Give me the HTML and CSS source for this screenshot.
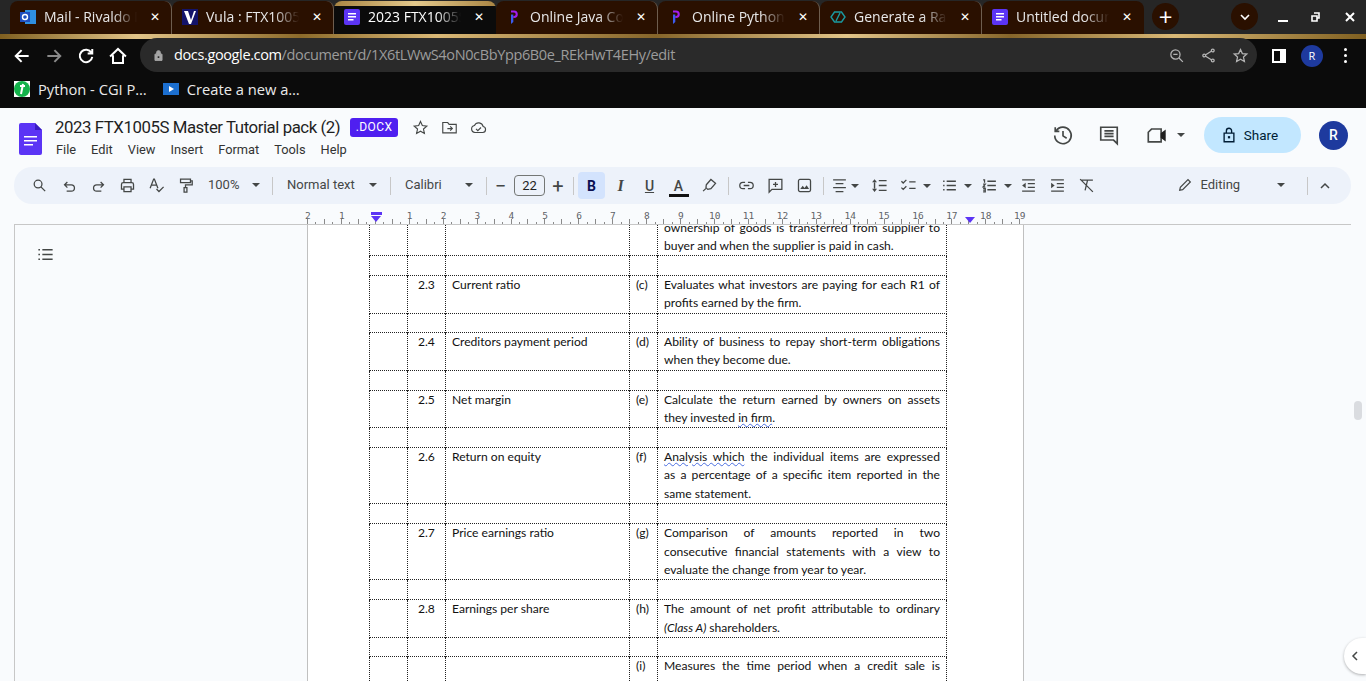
FILE: index.html
```html
<!DOCTYPE html>
<html lang="en">
<head>
  <meta charset="UTF-8">
  <title>2023 FTX1005S Master Tutorial pack (2)</title>
  <link rel="stylesheet" href="styles.css">
</head>
<body>
  <svg class="defs" width="0" height="0">
    <symbol id="i-search" viewBox="0 0 24 24"><circle cx="10" cy="10" r="5.5"/><path d="M14 14l6 6"/></symbol>
    <symbol id="i-undo" viewBox="0 0 24 24"><path d="M9 7l-4 4 4 4M5 11h9.500a4.500 4.500 0 0 1 0 9H8"/></symbol>
    <symbol id="i-redo" viewBox="0 0 24 24"><path d="M15 7l4 4-4 4M19 11H9.500a4.500 4.500 0 0 0 0 9H16"/></symbol>
    <symbol id="i-print" viewBox="0 0 24 24"><path d="M7 8V3.500h10V8M7 17H3.500v-6.500A2.500 2.500 0 0 1 6 8h12a2.500 2.500 0 0 1 2.500 2.500V17H17"/><path d="M7 14h10v6.500H7z"/></symbol>
    <symbol id="i-spell" viewBox="0 0 24 24"><path d="M3 16L8 3h1l5 13M5 11.500h7M12 17l3.500 3.500L22 14"/></symbol>
    <symbol id="i-paint" viewBox="0 0 24 24"><path d="M5 3h14v5H5zM19 5.500h2.500v5.500H12v4M10 15h4v6.500h-4z"/></symbol>
    <symbol id="i-ul" viewBox="0 0 24 24"><path d="M8 6h13M8 12h13M8 18h13"/><path class="dot" d="M3 5h2v2H3zM3 11h2v2H3zM3 17h2v2H3z"/></symbol>
    <symbol id="i-ol" viewBox="0 0 24 24"><path d="M9 6h12M9 12h12M9 18h12"/><path class="thin" d="M3 4h2v4M3 10h3l-3 4h3M3 16h3v5H3M3 18.500h3"/></symbol>
    <symbol id="i-check" viewBox="0 0 24 24"><path d="M2 6l2.500 2.500L9 4M2 15l2.500 2.500L9 13M13 7h9M13 16h9"/></symbol>
    <symbol id="i-align" viewBox="0 0 24 24"><path d="M3 4h18M6.500 9.500h11M3 15h18M6.500 20.500h11"/></symbol>
    <symbol id="i-spacing" viewBox="0 0 24 24"><path d="M11 5h11M11 12h11M11 19h11"/><path class="dot" d="M5 3L1.500 7.500h7zM5 21l3.500-4.500h-7zM4 7h2v10H4z"/></symbol>
    <symbol id="i-link" viewBox="0 0 24 24"><path d="M10 7.500H7a4.500 4.500 0 0 0 0 9h3M14 7.500h3a4.500 4.500 0 0 1 0 9h-3M8 12h8"/></symbol>
    <symbol id="i-addnote" viewBox="0 0 24 24"><path d="M3 3.500h18v14H7L3 21.500zM12 7v7M8.500 10.500h7"/></symbol>
    <symbol id="i-image" viewBox="0 0 24 24"><rect x="3.500" y="3.500" width="17" height="17" rx="2"/><path class="dot" d="M6 17l3.500-4.500L12 15.500l3-4 3.500 5.500z"/></symbol>
    <symbol id="i-outdent" viewBox="0 0 24 24"><path d="M3 4h18M11 9.500h10M11 14.500h10M3 20h18"/><path class="dot" d="M8 8v8l-5-4z"/></symbol>
    <symbol id="i-indent" viewBox="0 0 24 24"><path d="M3 4h18M11 9.500h10M11 14.500h10M3 20h18"/><path class="dot" d="M3 8v8l5-4z"/></symbol>
    <symbol id="i-clear" viewBox="0 0 24 24"><path d="M4 4.500h17M13.500 4.500L10 19M3 3l18 18"/></symbol>
    <symbol id="i-pencil" viewBox="0 0 24 24"><path d="M4 20l1-4.500L16.500 4l3.500 3.500L8.500 19z"/></symbol>
    <symbol id="i-highlight" viewBox="0 0 24 24"><path d="M7.500 11l6.500-7.500 6.500 5.500-6.500 7.500-4.500 1-2.500-2.500z"/><path d="M3 20l4-4"/></symbol>
    <symbol id="i-star" viewBox="0 0 24 24"><path d="M12 3.500l2.600 5.800 6.300.7-4.700 4.200 1.300 6.200L12 17.200l-5.500 3.200 1.300-6.200L3.100 10l6.300-.7z"/></symbol>
    <symbol id="i-folder" viewBox="0 0 24 24"><path d="M2.500 5h7l2 2.500h10v12h-19zM9 13.500h7M13 10.500l3 3-3 3"/></symbol>
    <symbol id="i-cloud" viewBox="0 0 24 24"><path d="M7 19a5 5 0 0 1-.7-9.900A6.500 6.500 0 0 1 18.500 10.500 4.300 4.300 0 0 1 18 19zM8.500 14l2.500 2.500 4.500-4.500"/></symbol>
    <symbol id="i-history" viewBox="0 0 24 24"><path d="M4.500 7.500a9 9 0 1 1-1.500 5M3.500 3.500v4.500H8M12 7.500V13l4 2.500"/></symbol>
    <symbol id="i-comment" viewBox="0 0 24 24"><path d="M3 3.500h18v18l-4-4H3zM7 7.500h10M7 10.500h10M7 13.500h10"/></symbol>
    <symbol id="i-meet" viewBox="0 0 24 24"><path d="M2.500 9l3.500-3.500h10.500v14h-14z"/><path class="dot" d="M16 10l5.500-4v13L16 15z"/></symbol>
    <symbol id="i-lock" viewBox="0 0 24 24"><path d="M5.500 9.500h13v11.500h-13zM8.500 9.500V6.500a3.500 3.500 0 0 1 7 0v3"/><path class="dot" d="M10.500 13.500h3v3h-3z"/></symbol>
    <symbol id="i-back" viewBox="0 0 24 24"><path d="M20 12H5M11.500 5L4.500 12l7 7"/></symbol>
    <symbol id="i-forward" viewBox="0 0 24 24"><path d="M4 12h15M12.500 5l7 7-7 7"/></symbol>
    <symbol id="i-reload" viewBox="0 0 24 24"><path d="M18.500 8A7.500 7.500 0 1 0 19.500 13M19.500 3.500V9h-5.500"/></symbol>
    <symbol id="i-home" viewBox="0 0 24 24"><path d="M2.500 12.500L12 3.500l9.500 9M6 11v9.500h12V11"/></symbol>
    <symbol id="i-share" viewBox="0 0 24 24"><circle cx="18" cy="5" r="2"/><circle cx="6" cy="12" r="2"/><circle cx="18" cy="19" r="2"/><path d="M8 11l8-5M8 13l8 5"/></symbol>
    <symbol id="i-zoomout" viewBox="0 0 24 24"><circle cx="10.500" cy="10.500" r="6.500"/><path d="M15.500 15.500L21 21M7.500 10.500h6"/></symbol>
    <symbol id="i-pcode" viewBox="0 0 10 16"><path d="M2 1.500h3a3.800 3.800 0 0 1 0 7.600H4.300V7H5a1.700 1.700 0 0 0 0-3.400H2z" style="fill:#a21cf0;stroke:none"/><path d="M2 5.500h2.300V13L2 15z" style="fill:#3c5cf0;stroke:none"/></symbol>
  </svg>

  <div class="tabstrip">
    <div class="tab">
      <svg class="favicon" viewBox="0 0 16 16"><rect x="5" y="1" width="11" height="14" fill="#2f8fe0"/><rect x="0" y="3" width="10" height="10" fill="#1f4fc0"/><circle cx="5" cy="8" r="2.500" fill="none" stroke="#fff" stroke-width="1.400"/></svg>
      <span class="tab-title">Mail - Rivaldo Mbhele</span><span class="tab-x">✕</span>
    </div>
    <div class="tab">
      <svg class="favicon" viewBox="0 0 16 16"><rect width="16" height="16" fill="#14146a"/><path d="M2 2h4l3 9 3-9h2l-5 13H7z" fill="#fff"/></svg>
      <span class="tab-title">Vula : FTX1005S</span><span class="tab-x">✕</span>
    </div>
    <div class="tab tab-active">
      <svg class="favicon" viewBox="0 0 16 16"><rect width="16" height="16" rx="2" fill="#5b34f5"/><path d="M4 4h8v1.500H4zM4 7h8v1.500H4zM4 10h5.500v1.500H4z" fill="#fff"/></svg>
      <span class="tab-title">2023 FTX1005S Master</span><span class="tab-x">✕</span>
    </div>
    <div class="tab">
      <svg class="favicon"><use href="#i-pcode"/></svg>
      <span class="tab-title">Online Java Compiler</span><span class="tab-x">✕</span>
    </div>
    <div class="tab">
      <svg class="favicon"><use href="#i-pcode"/></svg>
      <span class="tab-title">Online Python Compiler</span><span class="tab-x">✕</span>
    </div>
    <div class="tab">
      <svg class="favicon" viewBox="0 0 16 16"><path d="M4.500 3h7L15 8l-3.500 5h-7L1 8zM6 12l4-8" fill="none" stroke="#1a9aa0" stroke-width="1.400"/></svg>
      <span class="tab-title">Generate a Random</span><span class="tab-x">✕</span>
    </div>
    <div class="tab tab-last">
      <svg class="favicon" viewBox="0 0 16 16"><rect width="16" height="16" rx="2" fill="#5b34f5"/><path d="M4 4h8v1.500H4zM4 7h8v1.500H4zM4 10h5.500v1.500H4z" fill="#fff"/></svg>
      <span class="tab-title">Untitled document</span><span class="tab-x">✕</span>
    </div>
    <div class="round-btn newtab">+</div>
    <div class="round-btn tabsearch"><svg width="12" height="12" viewBox="0 0 12 12"><path d="M2 4l4 4 4-4" fill="none" stroke="#fff" stroke-width="1.600"/></svg></div>
    <div class="winctl">
      <svg width="14" height="14" viewBox="0 0 14 14"><path d="M2 11h10" stroke="#fff" stroke-width="2"/></svg>
      <svg width="14" height="14" viewBox="0 0 14 14"><path d="M6 3h5v5h-2M4 6h5v5H4z" fill="none" stroke="#fff" stroke-width="1.600"/></svg>
      <svg class="win-close" width="14" height="14" viewBox="0 0 14 14"><path d="M3 3l8 8M11 3l-8 8" stroke="#fff" stroke-width="2"/></svg>
    </div>
  </div>
  <div class="goldband"></div>

  <div class="navbar">
    <svg class="ic nav-btn nav-on"><use href="#i-back"/></svg>
    <svg class="ic nav-btn nav-off"><use href="#i-forward"/></svg>
    <svg class="ic nav-btn nav-on"><use href="#i-reload"/></svg>
    <svg class="ic nav-btn nav-on"><use href="#i-home"/></svg>
    <div class="omnibox">
      <svg class="ic ic-lock"><use href="#i-lock"/></svg>
      <span class="url"><span class="url-host">docs.google.com</span>/document/d/1X6tLWwS4oN0cBbYpp6B0e_REkHwT4EHy/edit</span>
      <svg class="ic omni-ic"><use href="#i-zoomout"/></svg>
      <svg class="ic omni-ic"><use href="#i-share"/></svg>
      <svg class="ic omni-ic"><use href="#i-star"/></svg>
    </div>
    <div class="panel-ic"></div>
    <div class="nav-avatar">R</div>
    <div class="kebab"><i></i><i></i><i></i></div>
  </div>

  <div class="bookmarks">
    <div class="bookmark">
      <svg class="favicon" viewBox="0 0 16 16"><rect width="16" height="16" fill="#fff"/><circle cx="8" cy="8" r="8" fill="#12b24a"/><path d="M6 5h5M9 3L7 13" stroke="#fff" stroke-width="2" fill="none"/></svg>
      Python - CGI P…
    </div>
    <div class="bookmark">
      <svg class="favicon" viewBox="0 0 16 16"><rect y="2" width="16" height="12" fill="#1c6fd0"/><path d="M6 5l5 3-5 3z" fill="#fff"/></svg>
      Create a new a…
    </div>
  </div>

  <header class="docbar">
    <svg class="docs-logo" viewBox="0 0 23 32"><path d="M2 0h14l7 7v23a2 2 0 0 1-2 2H2a2 2 0 0 1-2-2V2a2 2 0 0 1 2-2z" fill="#5b34f5"/><path d="M16 0l7 7h-7z" fill="#3a1cc0"/><path d="M5 13h13v1.500H5zM5 17h13v1.500H5zM5 21h9v1.500H5z" fill="#fff"/></svg>
    <div class="doc-meta">
      <div class="doc-titlerow">
        <span class="doc-title">2023 FTX1005S Master Tutorial pack (2)</span>
        <span class="badge">.DOCX</span>
        <svg class="ic title-ic"><use href="#i-star"/></svg>
        <svg class="ic title-ic"><use href="#i-folder"/></svg>
        <svg class="ic title-ic"><use href="#i-cloud"/></svg>
      </div>
      <nav class="menu">
        <span>File</span><span>Edit</span><span>View</span><span>Insert</span><span>Format</span><span>Tools</span><span>Help</span>
      </nav>
    </div>
    <div class="doc-actions">
      <svg class="ic act-ic"><use href="#i-history"/></svg>
      <svg class="ic act-ic act-comment"><use href="#i-comment"/></svg>
      <svg class="ic act-ic act-meet"><use href="#i-meet"/></svg>
      <span class="caret act-caret"></span>
      <div class="share"><svg class="ic share-ic"><use href="#i-lock"/></svg>Share</div>
      <div class="avatar">R</div>
    </div>
  </header>

  <div class="toolbar">
    <span class="tb tb-first"><svg class="ic"><use href="#i-search"/></svg></span>
    <span class="tb"><svg class="ic"><use href="#i-undo"/></svg></span>
    <span class="tb"><svg class="ic"><use href="#i-redo"/></svg></span>
    <span class="tb"><svg class="ic"><use href="#i-print"/></svg></span>
    <span class="tb"><svg class="ic"><use href="#i-spell"/></svg></span>
    <span class="tb"><svg class="ic"><use href="#i-paint"/></svg></span>
    <span class="drop drop-zoom">100%<span class="caret"></span></span>
    <span class="sep sep-zoom"></span>
    <span class="drop drop-style">Normal text<span class="caret"></span></span>
    <span class="sep"></span>
    <span class="drop drop-font">Calibri<span class="caret"></span></span>
    <span class="sep"></span>
    <span class="tb tb-sign tb-minus">−</span>
    <span class="fontsize">22</span>
    <span class="tb tb-sign tb-plus">+</span>
    <span class="sep sep-size"></span>
    <span class="tb tb-bold">B</span>
    <span class="tb tb-letter tb-italic">I</span>
    <span class="tb tb-letter tb-under">U</span>
    <span class="tb tb-letter tb-color">A</span>
    <span class="tb tb-hl"><svg class="ic"><use href="#i-highlight"/></svg></span>
    <span class="sep sep-hl"></span>
    <span class="tb"><svg class="ic"><use href="#i-link"/></svg></span>
    <span class="tb"><svg class="ic"><use href="#i-addnote"/></svg></span>
    <span class="tb"><svg class="ic"><use href="#i-image"/></svg></span>
    <span class="sep sep-img"></span>
    <span class="tb tb-caret tb-align"><svg class="ic"><use href="#i-align"/></svg><span class="caret"></span></span>
    <span class="tb"><svg class="ic"><use href="#i-spacing"/></svg></span>
    <span class="tb tb-caret tb-check"><svg class="ic"><use href="#i-check"/></svg><span class="caret"></span></span>
    <span class="tb tb-caret"><svg class="ic"><use href="#i-ul"/></svg><span class="caret"></span></span>
    <span class="tb tb-caret tb-ol"><svg class="ic"><use href="#i-ol"/></svg><span class="caret"></span></span>
    <span class="tb"><svg class="ic"><use href="#i-outdent"/></svg></span>
    <span class="tb"><svg class="ic"><use href="#i-indent"/></svg></span>
    <span class="tb"><svg class="ic"><use href="#i-clear"/></svg></span>
    <span class="mode"><svg class="ic"><use href="#i-pencil"/></svg><span class="mode-label">Editing</span><span class="caret"></span></span>
    <span class="sep sep-mode"></span>
    <svg class="chev" width="12" height="12" viewBox="0 0 12 12"><path d="M2 8l4-4 4 4" fill="none" stroke="#444746" stroke-width="1.500"/></svg>
  </div>

  <div class="ruler">
    <div class="ruler-nums">
      <span>2</span><span>1</span><span></span><span>1</span><span>2</span><span>3</span><span>4</span><span>5</span><span>6</span><span>7</span><span>8</span><span>9</span><span>10</span><span>11</span><span>12</span><span>13</span><span>14</span><span>15</span><span>16</span><span>17</span><span>18</span><span>19</span>
    </div>
    <span class="indent-bar"></span>
    <span class="indent-left"></span>
    <span class="indent-right"></span>
  </div>

  <main class="workspace">
    <aside class="outline"><svg class="ic outline-ic"><use href="#i-ul"/></svg></aside>
    <section class="page">
      <table class="qtable">
        <colgroup><col class="c1"><col class="c2"><col class="c3"><col class="c4"><col class="c5"></colgroup>
        <tr class="r38 first"><td></td><td></td><td></td><td></td><td><span class="ln just">ownership of goods is transferred from supplier to</span><span class="ln">buyer and when the supplier is paid in cash.</span></td></tr>
        <tr class="r20"><td></td><td></td><td></td><td></td><td></td></tr>
        <tr class="r38"><td></td><td class="num">2.3</td><td>Current ratio</td><td class="let">(c)</td><td><span class="ln just">Evaluates what investors are paying for each R1 of</span><span class="ln">profits earned by the firm.</span></td></tr>
        <tr class="r19"><td></td><td></td><td></td><td></td><td></td></tr>
        <tr class="r38"><td></td><td class="num">2.4</td><td>Creditors payment period</td><td class="let">(d)</td><td><span class="ln just">Ability of business to repay short-term obligations</span><span class="ln">when they become due.</span></td></tr>
        <tr class="r20"><td></td><td></td><td></td><td></td><td></td></tr>
        <tr class="r37"><td></td><td class="num">2.5</td><td>Net margin</td><td class="let">(e)</td><td><span class="ln just">Calculate the return earned by owners on assets</span><span class="ln">they invested <span class="squiggle">in firm</span>.</span></td></tr>
        <tr class="r20"><td></td><td></td><td></td><td></td><td></td></tr>
        <tr class="r56"><td></td><td class="num">2.6</td><td>Return on equity</td><td class="let">(f)</td><td><span class="ln just"><span class="squiggle">Analysis which</span> the individual items are expressed</span><span class="ln just">as a percentage of a specific item reported in the</span><span class="ln">same statement.</span></td></tr>
        <tr class="r20"><td></td><td></td><td></td><td></td><td></td></tr>
        <tr class="r56"><td></td><td class="num">2.7</td><td>Price earnings ratio</td><td class="let">(g)</td><td><span class="ln just">Comparison of amounts reported in two</span><span class="ln just">consecutive financial statements with a view to</span><span class="ln">evaluate the change from year to year.</span></td></tr>
        <tr class="r20"><td></td><td></td><td></td><td></td><td></td></tr>
        <tr class="r38"><td></td><td class="num">2.8</td><td>Earnings per share</td><td class="let">(h)</td><td><span class="ln just">The amount of net profit attributable to ordinary</span><span class="ln"><em>(Class A)</em> shareholders.</span></td></tr>
        <tr class="r19"><td></td><td></td><td></td><td></td><td></td></tr>
        <tr class="r38"><td></td><td></td><td></td><td class="let">(i)</td><td><span class="ln just">Measures the time period when a credit sale is</span></td></tr>
      </table>
    </section>
    <div class="scroll-thumb"></div>
  </main>
  <div class="side-toggle"><svg width="12" height="12" viewBox="0 0 12 12"><path d="M8 2L4 6l4 4" fill="none" stroke="#444746" stroke-width="1.500"/></svg></div>
</body>
</html>
```

FILE: styles.css
```css
* {
  box-sizing: border-box;
}

html, body {
  margin: 0;
  height: 100%;
}

body {
  position: relative;
  width: 1366px;
  height: 681px;
  overflow: hidden;
  display: flex;
  flex-direction: column;
  background: #f9fbfd;
  font-family: "Open Sans", "Noto Sans", sans-serif;
  color: #1f1f1f;
}

.defs {
  position: absolute;
}

.ic {
  width: 18px;
  height: 18px;
  flex: none;
  fill: none;
  stroke: #444746;
  stroke-width: 1.8;
}

symbol .dot {
  fill: currentColor;
  stroke: none;
}

.favicon {
  width: 16px;
  height: 16px;
  flex: none;
}

/* browser chrome */
.tabstrip {
  height: 34px;
  flex: none;
  display: flex;
  align-items: flex-end;
  padding-left: 10px;
  background: #262626;
}

.tab {
  width: 162px;
  height: 33px;
  display: flex;
  align-items: center;
  padding: 0 0 2px 10px;
  background: #2a1000;
  border-radius: 8px 8px 0 0;
  border-right: 1px solid #6e5d4e;
  color: #e8e8e8;
  font-size: 14px;
}

.tab-active {
  background: linear-gradient(90deg, #a98543, #e4c98c 50%, #a98543) top / 100% 5px no-repeat, #0b0b0b;
  border: 0;
  color: #fff;
}

.tab-last {
  border-right: 0;
}

.tab-title {
  width: 95px;
  margin-left: 8px;
  white-space: nowrap;
  overflow: hidden;
  -webkit-mask-image: linear-gradient(90deg, #000 72%, transparent 98%);
  mask-image: linear-gradient(90deg, #000 72%, transparent 98%);
}

.tab-x {
  margin-left: 11px;
  font-size: 12px;
  color: #fff;
}

.round-btn {
  display: flex;
  align-items: center;
  justify-content: center;
  width: 27px;
  height: 27px;
  margin-bottom: 4px;
  border-radius: 50%;
  background: #2a1000;
  color: #fff;
}

.newtab {
  margin-left: 8px;
  font-size: 24px;
  line-height: 1;
}

.tabsearch {
  margin-left: 52px;
}

.winctl {
  display: flex;
  gap: 18px;
  margin-left: 18px;
  margin-bottom: 10px;
}

.win-close {
  margin-left: 3px;
}

.goldband {
  height: 5px;
  flex: none;
  background: linear-gradient(90deg, #7f5f20 0, #e2c488 10%, #8c6a2a 22%, #d9b876 32%, #86652a 48%, #e2c488 62%, #86652a 74%, #d9b876 86%, #7f5f20 100%);
}

.navbar {
  height: 33px;
  flex: none;
  display: flex;
  align-items: center;
  padding-left: 12px;
  background: #0b0b0b;
}

.nav-btn {
  width: 20px;
  height: 20px;
  margin-right: 12px;
  stroke-width: 2.4;
}

.nav-on {
  stroke: #fff;
}

.nav-off {
  stroke: #8a8a8a;
}

.omnibox {
  width: 1117px;
  height: 34px;
  margin-top: -1px;
  display: flex;
  align-items: center;
  padding: 0 8px 0 12px;
  border-radius: 17px;
  background: #2a2a2a;
}

.ic-lock {
  width: 13px;
  height: 13px;
  stroke: #a6a6a6;
  fill: #a6a6a6;
}

.url {
  flex: 1;
  margin: -2px 0 0 9px;
  font-size: 14.5px;
  letter-spacing: -0.37px;
  color: #9c9c9c;
  white-space: nowrap;
}

.url-host {
  color: #fff;
}

.omni-ic {
  width: 17px;
  height: 17px;
  margin-left: 15px;
  stroke: #b4b4b4;
}

.panel-ic {
  width: 14px;
  height: 14px;
  margin-left: 15px;
  border: 2px solid #fff;
  border-right-width: 6px;
}

.nav-avatar {
  width: 22px;
  height: 22px;
  margin-left: 15px;
  border-radius: 50%;
  background: #1e3a9e;
  color: #fff;
  font-size: 11px;
  line-height: 22px;
  text-align: center;
}

.kebab {
  display: flex;
  flex-direction: column;
  gap: 3px;
  margin-left: 21px;
}

.kebab i {
  width: 3px;
  height: 3px;
  border-radius: 50%;
  background: #fff;
}

.bookmarks {
  height: 36px;
  flex: none;
  display: flex;
  align-items: center;
  gap: 16px;
  padding: 0 0 2px 14px;
  background: #0b0b0b;
}

.bookmark {
  display: flex;
  align-items: center;
  gap: 8px;
  color: #eaeaea;
  font-size: 14.7px;
}

/* docs header */
.docbar {
  height: 59px;
  flex: none;
  display: flex;
  padding: 9px 0 0 19px;
  font-family: Roboto, "Open Sans", sans-serif;
}

.docs-logo {
  width: 23px;
  height: 32px;
  margin-top: 6px;
}

.doc-meta {
  margin-left: 13px;
}

.doc-titlerow {
  display: flex;
  align-items: center;
  height: 20px;
}

.doc-title {
  font-size: 16.8px;
  letter-spacing: -0.43px;
}

.badge {
  margin: 0 2px 0 10px;
  padding: 0 5.5px;
  height: 19px;
  line-height: 19px;
  border-radius: 3px;
  background: #4f1ff0;
  color: #fff;
  font-size: 12px;
  letter-spacing: 0.4px;
}

.title-ic {
  width: 17px;
  height: 17px;
  margin-left: 12px;
  stroke-width: 1.6;
}

.menu {
  display: flex;
  gap: 15px;
  margin-top: 5px;
  padding-left: 1px;
  font-size: 12.8px;
  color: #333;
}

.doc-actions {
  display: flex;
  align-items: center;
  margin-left: auto;
  height: 36px;
}

.act-ic {
  width: 22px;
  height: 22px;
  margin-right: 24px;
}

.act-comment {
  margin-right: 26px;
}

.act-meet {
  margin-right: 0;
}

.act-caret {
  margin: 0 19px 0 9px;
}

.caret {
  display: inline-block;
  flex: none;
  width: 0;
  height: 0;
  border: 4px solid transparent;
  border-top-color: #444746;
  border-bottom: 0;
}

.share {
  width: 97px;
  height: 36px;
  display: flex;
  align-items: center;
  justify-content: center;
  gap: 6px;
  padding-right: 7px;
  border-radius: 18px;
  background: #c2e7ff;
  font-size: 13.5px;
  color: #001d35;
}

.share-ic {
  width: 18px;
  height: 18px;
  stroke: #001d35;
  color: #001d35;
}

.avatar {
  width: 29px;
  height: 29px;
  margin: 0 18px 0 18px;
  border-radius: 50%;
  background: #1e3a9e;
  color: #fff;
  font-size: 14px;
  font-weight: 500;
  line-height: 29px;
  text-align: center;
}

.toolbar {
  height: 37px;
  flex: none;
  width: 1337px;
  margin-left: 14px;
  display: flex;
  align-items: center;
  padding-left: 11px;
  border-radius: 18px;
  background: #edf2fa;
  font-family: Roboto, "Open Sans", sans-serif;
  font-size: 13px;
  color: #444746;
}

.tb {
  width: 29px;
  height: 27px;
  flex: none;
  display: flex;
  align-items: center;
  justify-content: center;
}

.tb-first {
  margin-right: 1px;
}

.tb .ic {
  width: 17px;
  height: 17px;
  color: #444746;
}

.tb-caret {
  justify-content: flex-start;
  gap: 6px;
  width: 40px;
  padding-left: 2px;
}

.tb-align {
  gap: 3px;
  width: 36px;
}

.tb-check {
  width: 41px;
  margin-left: 4px;
}

.tb-ol {
  width: 35px;
}

.tb-sign {
  font-size: 20px;
}

.tb-minus {
  width: 27px;
}

.tb-plus {
  width: 26px;
}

.tb-bold {
  width: 27px;
  margin-right: 1px;
  border-radius: 4px;
  background: #d3e3fd;
  color: #0b0f52;
  font-weight: 700;
  font-size: 14px;
}

.tb-letter {
  font-size: 14px;
  font-weight: 500;
}

.tb-italic {
  font-family: "Liberation Serif", serif;
  font-style: italic;
  font-weight: 700;
  font-size: 16px;
}

.tb-under {
  text-decoration: underline;
}

.tb-color {
  background: linear-gradient(#111, #111) center 22px / 20px 3px no-repeat;
}

.tb-hl {
  margin-left: 2px;
}

.drop {
  flex: none;
  display: flex;
  align-items: center;
  justify-content: space-between;
  padding-bottom: 2px;
}

.drop-zoom {
  width: 52px;
  margin-left: 8px;
}

.drop-style {
  width: 90px;
  margin-left: 14px;
}

.drop-font {
  width: 68px;
  margin-left: 14px;
}

.sep {
  width: 1px;
  height: 18px;
  flex: none;
  margin-left: 13px;
  background: #c7c7c7;
}

.sep-zoom {
  margin-left: 12px;
}

.sep-size {
  margin: 0 4px 0 2px;
}

.sep-hl {
  margin: 0 3px 0 4px;
}

.sep-img {
  margin: 0 4.5px 0 4px;
}

.fontsize {
  width: 31px;
  height: 21px;
  flex: none;
  border: 1px solid #747775;
  border-radius: 4px;
  text-align: center;
  line-height: 19px;
  color: #1f1f1f;
}

.mode {
  display: flex;
  align-items: center;
  width: 108px;
  margin-left: 76px;
  padding-bottom: 2px;
}

.mode .ic {
  width: 16px;
  height: 16px;
}

.mode-label {
  flex: 1;
  margin-left: 8px;
}

.sep-mode {
  margin-left: 22px;
}

.chev {
  margin-left: 11px;
}

/* ruler */
.ruler {
  position: relative;
  height: 20px;
  flex: none;
  margin-left: 307px;
  width: 717px;
  background:
    repeating-linear-gradient(90deg, #8a8a8a 0 1px, transparent 1px 8.48px) 0 bottom / 100% 2px no-repeat,
    repeating-linear-gradient(90deg, #8a8a8a 0 1px, transparent 1px 16.96px) 0 bottom / 100% 5px no-repeat;
}

.ruler-nums {
  display: flex;
  margin-left: -16px;
  font-family: "DejaVu Sans Mono", monospace;
  font-size: 9.5px;
  line-height: 1;
  padding-top: 7px;
  color: #5f6368;
}

.ruler-nums span {
  width: 33.9px;
  flex: none;
  text-align: center;
}

.indent-bar {
  position: absolute;
  left: 64px;
  top: 8px;
  width: 11px;
  height: 3px;
  background: #5b34f5;
}

.indent-left,
.indent-right {
  position: absolute;
  top: 12px;
  width: 0;
  height: 0;
  border: 5.5px solid transparent;
  border-top: 6px solid #5b34f5;
  border-bottom: 0;
}

.indent-left {
  left: 64px;
}

.indent-right {
  left: 658px;
  top: 13px;
}

/* document */
.workspace {
  position: relative;
  flex: 1;
  min-height: 0;
  display: flex;
  margin: 0 15px 0 14px;
  border-top: 1px solid #c7c7c7;
  border-left: 1px solid #c7c7c7;
}

.outline {
  width: 292px;
  flex: none;
  padding: 20px 0 0 21px;
}

.outline-ic {
  display: block;
  width: 19px;
  height: 19px;
  stroke-width: 2.2;
  color: #444746;
}

.page {
  width: 717px;
  flex: none;
  overflow: hidden;
  padding-left: 61px;
  background: #fff;
  border-left: 1px solid #c0c0c0;
  border-right: 1px solid #c0c0c0;
}

.qtable {
  width: 578px;
  margin-top: -7px;
  table-layout: fixed;
  border-collapse: separate;
  border-spacing: 0;
  font-family: Lato, "Liberation Sans", sans-serif;
  font-size: 12.1px;
  line-height: 18.4px;
  color: #111;
}

.c1, .c2 { width: 38px; }
.c3 { width: 184px; }
.c4 { width: 28px; }
.c5 { width: 290px; }

.qtable td {
  padding: 0 6px;
  vertical-align: top;
  border-bottom: 1px dotted #222;
  border-left: 1px dotted #222;
}

.qtable td:last-child {
  border-right: 1px dotted #222;
}

.r19 td { height: 19px; }
.r20 td { height: 20px; }
.r37 td { height: 37px; }
.r38 td { height: 38px; }
.r56 td { height: 56px; }

.r37 .ln,
.first .ln {
  line-height: 18px;
}

.first td {
  padding-top: 1px;
}

.qtable .num {
  padding: 0 0 0 10px;
}

.qtable .let {
  padding: 0 0 0 6px;
}

.ln {
  display: block;
  white-space: nowrap;
}

.just {
  white-space: normal;
  text-align: justify;
  text-align-last: justify;
}

.squiggle {
  text-decoration: underline wavy #4a6ee0 1px;
}

.scroll-thumb {
  position: absolute;
  left: 1339px;
  top: 176px;
  width: 8px;
  height: 19px;
  border-radius: 4px;
  background: #dadce0;
}

.side-toggle {
  position: absolute;
  right: 0;
  top: 638px;
  width: 22px;
  height: 36px;
  display: flex;
  align-items: center;
  justify-content: center;
  border-radius: 18px 0 0 18px;
  background: #fff;
  box-shadow: 0 1px 3px rgba(0, 0, 0, 0.3);
}
```
